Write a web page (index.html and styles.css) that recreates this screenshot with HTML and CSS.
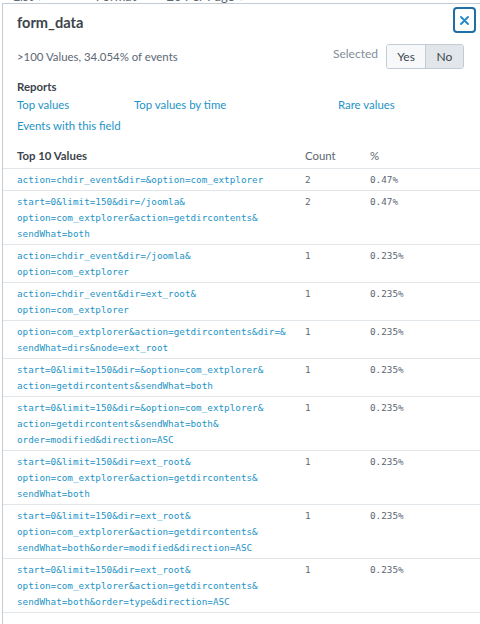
FILE: index.html
```html
<!DOCTYPE html>
<html>
<head>
<meta charset="utf-8">
<link rel="stylesheet" href="styles.css">
</head>
<body>
<div class="topbar">
  <span class="tb tb-list">List ▾</span>
  <span class="tb tb-format">✓ Format</span>
  <span class="tb tb-page">20 Per Page ▾</span>
</div>
<div class="panel">
  <div class="header">
    <h1 class="title">form_data</h1>
    <button class="close" aria-label="Close">
      <svg width="9" height="9" viewBox="0 0 9 9"><path d="M1 1L8 8M8 1L1 8" stroke="#1e88c8" stroke-width="1.8" stroke-linecap="round" fill="none"/></svg>
    </button>
  </div>
  <div class="summary">
    <span class="summary-text">&gt;100 Values, 34.054% of events</span>
    <div class="selected">
      <span class="selected-label">Selected</span>
      <div class="toggle">
        <span class="toggle-btn yes">Yes</span>
        <span class="toggle-btn no">No</span>
      </div>
    </div>
  </div>
  <div class="reports">
    <div class="section-title">Reports</div>
    <div class="links">
      <a class="link">Top values</a>
      <a class="link">Top values by time</a>
      <a class="link">Rare values</a>
      <a class="link">Events with this field</a>
    </div>
  </div>
  <div class="table">
    <div class="row head">
      <span class="th-main">Top 10 Values</span>
      <span class="th">Count</span>
      <span class="th">%</span>
    </div>
    <div class="row">
      <span class="val">action=chdir_event&amp;dir=&amp;option=com_extplorer</span>
      <span class="num">2</span><span class="num">0.47%</span>
    </div>
    <div class="row">
      <span class="val">start=0&amp;limit=150&amp;dir=/joomla&amp;<br>option=com_extplorer&amp;action=getdircontents&amp;<br>sendWhat=both</span>
      <span class="num">2</span><span class="num">0.47%</span>
    </div>
    <div class="row">
      <span class="val">action=chdir_event&amp;dir=/joomla&amp;<br>option=com_extplorer</span>
      <span class="num">1</span><span class="num">0.235%</span>
    </div>
    <div class="row">
      <span class="val">action=chdir_event&amp;dir=ext_root&amp;<br>option=com_extplorer</span>
      <span class="num">1</span><span class="num">0.235%</span>
    </div>
    <div class="row">
      <span class="val">option=com_extplorer&amp;action=getdircontents&amp;dir=&amp;<br>sendWhat=dirs&amp;node=ext_root</span>
      <span class="num">1</span><span class="num">0.235%</span>
    </div>
    <div class="row">
      <span class="val">start=0&amp;limit=150&amp;dir=&amp;option=com_extplorer&amp;<br>action=getdircontents&amp;sendWhat=both</span>
      <span class="num">1</span><span class="num">0.235%</span>
    </div>
    <div class="row">
      <span class="val">start=0&amp;limit=150&amp;dir=&amp;option=com_extplorer&amp;<br>action=getdircontents&amp;sendWhat=both&amp;<br>order=modified&amp;direction=ASC</span>
      <span class="num">1</span><span class="num">0.235%</span>
    </div>
    <div class="row">
      <span class="val">start=0&amp;limit=150&amp;dir=ext_root&amp;<br>option=com_extplorer&amp;action=getdircontents&amp;<br>sendWhat=both</span>
      <span class="num">1</span><span class="num">0.235%</span>
    </div>
    <div class="row">
      <span class="val">start=0&amp;limit=150&amp;dir=ext_root&amp;<br>option=com_extplorer&amp;action=getdircontents&amp;<br>sendWhat=both&amp;order=modified&amp;direction=ASC</span>
      <span class="num">1</span><span class="num">0.235%</span>
    </div>
    <div class="row last">
      <span class="val">start=0&amp;limit=150&amp;dir=ext_root&amp;<br>option=com_extplorer&amp;action=getdircontents&amp;<br>sendWhat=both&amp;order=type&amp;direction=ASC</span>
      <span class="num">1</span><span class="num">0.235%</span>
    </div>
  </div>
</div>
</body>
</html>
```

FILE: styles.css
```css
* { box-sizing: border-box; }
html, body { margin: 0; padding: 0; background: #fff; }
body {
  font-family: Lato, "Open Sans", sans-serif;
  font-size: 11.4px;
  color: #3c444d;
  width: 480px;
  height: 624px;
  overflow: hidden;
}
.topbar {
  height: 3px;
  overflow: hidden;
  display: flex;
  align-items: flex-end;
  padding-left: 13px;
}
.tb {
  font-size: 13px;
  line-height: 13px;
  color: #5c6773;
  white-space: nowrap;
  flex: none;
}
.tb-format { margin-left: 38px; }
.tb-page { margin-left: 30px; }

.panel {
  margin-left: 2px;
  border-left: 1px solid #c3cbd4;
  border-top: 1px solid #c3cbd4;
  height: 621px;
}
.header {
  display: flex;
  justify-content: space-between;
  align-items: flex-start;
  padding: 3px 4px 0 14px;
}
.title {
  margin: 7px 0 0;
  font-size: 14.6px;
  line-height: 18px;
  font-weight: 700;
  color: #3c444d;
}
.close {
  width: 23px;
  height: 26px;
  border: 2px solid #1f6fa6;
  border-radius: 4px;
  background: #fff;
  padding: 0;
  display: flex;
  align-items: center;
  justify-content: center;
}
.summary {
  display: flex;
  justify-content: space-between;
  align-items: center;
  margin-top: 11px;
  padding: 0 16px 0 14px;
}
.summary-text { color: #5c6773; line-height: 16px; }
.selected { display: flex; align-items: center; gap: 8px; }
.selected-label { color: #818d99; font-size: 12px; padding-bottom: 6px; }
.toggle {
  display: flex;
  height: 25px;
  border: 1px solid #c3cbd4;
  border-radius: 3px;
  overflow: hidden;
}
.toggle-btn {
  display: flex;
  align-items: center;
  justify-content: center;
  color: #3c444d;
  font-size: 12px;
}
.yes { width: 39px; background: #f7f8fa; border-right: 1px solid #c3cbd4; }
.no { width: 37px; background: #e1e6eb; }

.reports { padding: 0 14px; margin-top: 10px; }
.section-title { font-weight: 700; line-height: 16px; }
.links {
  display: grid;
  grid-template-columns: 117px 204px auto;
  row-gap: 5px;
  margin-top: 2px;
}
.link { color: #1e93c6; line-height: 16px; cursor: pointer; }

.table { margin-top: 14px; }
.row {
  display: grid;
  grid-template-columns: 288px 65px 1fr;
  padding: 3px 0 2px 14px;
  border-top: 1px solid #e1e6eb;
  line-height: 16px;
}
.row.head { border-top: none; padding: 0 0 4px 14px; }
.row.last { border-bottom: 1px solid #e1e6eb; }
.th-main { font-weight: 700; color: #3c444d; }
.th { color: #5c6773; }
.val {
  font-family: "DejaVu Sans Mono", monospace;
  font-size: 9.3px;
  color: #1e93c6;
  white-space: nowrap;
}
.num {
  font-family: "DejaVu Sans Mono", monospace;
  font-size: 9.3px;
  color: #5c6773;
}
```
